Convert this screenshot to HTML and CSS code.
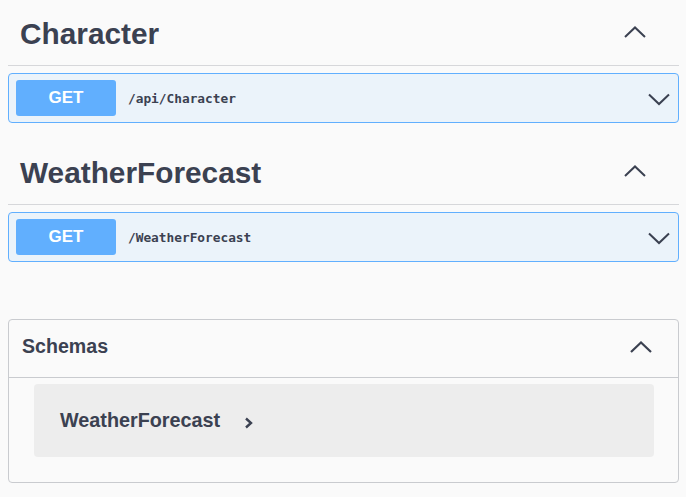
FILE: index.html
```html
<!DOCTYPE html>
<html>
<head>
<meta charset="utf-8">
<link rel="stylesheet" href="styles.css">
</head>
<body>
<div class="wrap">
  <section class="tag-section">
    <div class="tag-header">
      <h3 class="tag-title">Character</h3>
      <svg class="chev-up" width="22" height="12" viewBox="0 0 22 12"><polyline points="1,11 11,1.5 21,11" fill="none" stroke="#3b4151" stroke-width="2"/></svg>
    </div>
    <div class="opblock">
      <span class="method">GET</span>
      <span class="path">/api/Character</span>
      <svg class="chev-down" width="22" height="13" viewBox="0 0 22 13"><polyline points="1,1.5 11,11 21,1.5" fill="none" stroke="#3b4151" stroke-width="2"/></svg>
    </div>
  </section>
  <section class="tag-section">
    <div class="tag-header">
      <h3 class="tag-title">WeatherForecast</h3>
      <svg class="chev-up" width="22" height="12" viewBox="0 0 22 12"><polyline points="1,11 11,1.5 21,11" fill="none" stroke="#3b4151" stroke-width="2"/></svg>
    </div>
    <div class="opblock">
      <span class="method">GET</span>
      <span class="path">/WeatherForecast</span>
      <svg class="chev-down" width="22" height="13" viewBox="0 0 22 13"><polyline points="1,1.5 11,11 21,1.5" fill="none" stroke="#3b4151" stroke-width="2"/></svg>
    </div>
  </section>
  <section class="schemas">
    <div class="schemas-header">
      <h4 class="schemas-title">Schemas</h4>
      <svg class="chev-up-s" width="22" height="12" viewBox="0 0 22 12"><polyline points="1,11 11,1.5 21,11" fill="none" stroke="#3b4151" stroke-width="2.2"/></svg>
    </div>
    <div class="schemas-body">
      <div class="model-box">
        <span class="model-title">WeatherForecast</span>
        <svg class="chev-right" width="9" height="12" viewBox="0 0 9 12"><polyline points="2,1.5 7,6 2,10.5" fill="none" stroke="#3b4151" stroke-width="2.4"/></svg>
      </div>
    </div>
  </section>
</div>
</body>
</html>
```
FILE: styles.css
```css
html, body {
  margin: 0;
  padding: 0;
  background: #fafafa;
  font-family: "Liberation Sans", Arial, sans-serif;
  color: #3b4151;
}

.wrap {
  padding: 0 7px 0 8px;
}

.tag-section {
  margin-bottom: 16px;
}

.tag-header {
  display: flex;
  align-items: center;
  justify-content: space-between;
  height: 66px;
  box-sizing: border-box;
  padding: 2px 33px 0 12px;
  border-bottom: 1px solid #d6d7da;
}

.tag-title {
  margin: 0;
  font-size: 29.8px;
  font-weight: bold;
  color: #3b4151;
}

.chev-up {
  display: block;
  margin-bottom: 3px;
}

.opblock {
  margin-top: 7px;
  display: flex;
  align-items: center;
  padding: 6px 8px 6px 7px;
  border: 1px solid #61affe;
  border-radius: 4px;
  background: #ebf3fa;
}

.method {
  display: flex;
  align-items: center;
  justify-content: center;
  width: 100px;
  height: 36px;
  border-radius: 3px;
  background: #61affe;
  color: #fff;
  font-size: 17px;
  font-weight: bold;
}

.path {
  flex: 1;
  margin-left: 12px;
  font-family: "DejaVu Sans Mono", "Liberation Mono", monospace;
  font-size: 12.8px;
  font-weight: bold;
  color: #3b4151;
}

.chev-down {
  display: block;
  margin-top: 2px;
}

.schemas {
  margin-top: 57px;
  border: 1px solid #c9cbcf;
  border-radius: 4px;
}

.schemas-header {
  display: flex;
  align-items: center;
  justify-content: space-between;
  height: 58px;
  box-sizing: border-box;
  padding: 0 26px 5px 13px;
  border-bottom: 1px solid #c9cbcf;
}

.schemas-title {
  margin: 0;
  font-size: 19.6px;
  font-weight: bold;
}

.chev-up-s {
  display: block;
  margin-top: 2px;
}

.schemas-body {
  padding: 6px 24px 25px 25px;
}

.model-box {
  display: flex;
  align-items: center;
  height: 73px;
  padding-left: 26px;
  border-radius: 4px;
  background: #ededed;
}

.model-title {
  font-size: 19.8px;
  font-weight: bold;
}

.chev-right {
  display: block;
  margin-left: 24px;
  margin-top: 4px;
}
```
